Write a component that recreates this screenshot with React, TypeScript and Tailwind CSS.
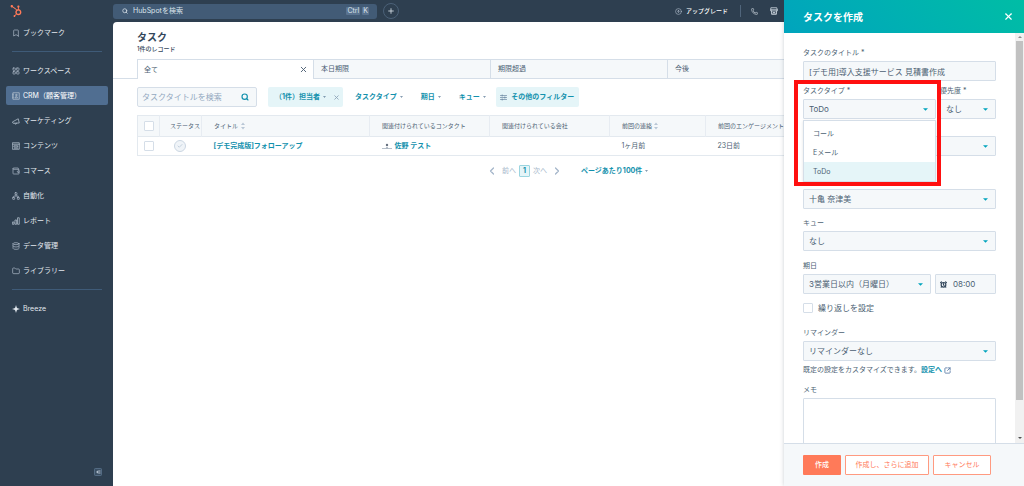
import React from "react";
import type { ReactNode } from "react";
import {
  Bookmark,
  LayoutGrid,
  Wallet,
  Network,
  Database,
  Folder,
  Search,
  Plus,
  CircleArrowUp,
  Phone,
  X,
  Check,
  ChevronLeft,
  ChevronRight,
  SquareArrowOutUpRight,
  AlarmClock,
} from "lucide-react";
import { FaHubspot } from "react-icons/fa";

type IconProps = { className?: string; strokeWidth?: number };

function LineIcon({ className, children }: IconProps & { children: ReactNode }) {
  return (
    <svg
      viewBox="0 0 16 16"
      className={className}
      fill="none"
      stroke="currentColor"
      strokeWidth="1.5"
      strokeLinejoin="round"
      strokeLinecap="round"
      aria-hidden="true"
    >
      {children}
    </svg>
  );
}

const ContactCard = (p: IconProps) => (
  <LineIcon {...p}>
    <path d="M2.5 1.5h12v13h-12zM1 4.5h2M1 8h2M1 11.500h2" />
    <circle cx="8.500" cy="6" r="1.400" />
    <path d="M6 11c0-3 5-3 5 0z" />
  </LineIcon>
);

const Horn = (p: IconProps) => (
  <LineIcon {...p}>
    <path d="M1.500 9.500 12.500 3.500 14.500 12 3 12.500zM5.500 12.500c0 3 4 2.500 4-.300" />
  </LineIcon>
);

const Article = (p: IconProps) => (
  <LineIcon {...p}>
    <path d="M1.500 1.500h13v13h-13zM1.500 4.500h13M4.500 7.500h7v2.500h-7zM4.500 12.300h7" />
  </LineIcon>
);

const Bars = (p: IconProps) => (
  <LineIcon {...p}>
    <path d="M1.500 10h2.600v4.500H1.500zM6.700 6h2.600v8.500H6.700zM11.900 1.500h2.600v13h-2.600z" />
  </LineIcon>
);

const Breeze = ({ className }: IconProps) => (
  <svg viewBox="0 0 16 16" className={className} aria-hidden="true">
    <path d="M8 0l1.500 5L11 6.500 16 8l-5 1.500L9.500 11 8 16l-1.500-5L5 9.500 0 8l5-1.500L6.500 5z" fill="#e3e9ef" />
  </svg>
);

const Shop = (p: IconProps) => (
  <LineIcon {...p}>
    <path d="M2.500 1.500h11l1 4v2.500h-13V5.500zM1.500 5.500h13M3 8v6.500h10V8M6 14.500v-3.500h4v3.500" />
  </LineIcon>
);

const Filters = (p: IconProps) => (
  <LineIcon {...p}>
    <path d="M1 3.500h14M1 8h14M1 12.500h14M5 2v3M11 6.500v3M5 11v3" />
  </LineIcon>
);

const navItems = [
  { label: "ワークスペース", Icon: LayoutGrid },
  { label: "CRM（顧客管理）", Icon: ContactCard, active: true },
  { label: "マーケティング", Icon: Horn },
  { label: "コンテンツ", Icon: Article },
  { label: "コマース", Icon: Wallet },
  { label: "自動化", Icon: Network },
  { label: "レポート", Icon: Bars },
  { label: "データ管理", Icon: Database },
  { label: "ライブラリー", Icon: Folder },
];

function NavLink({ label, Icon, active }: { label: string; Icon: React.ElementType; active?: boolean }) {
  return (
    <a
      href="#"
      className={
        active
          ? "flex h-[19px] items-center gap-[3px] rounded-[2px] bg-[#506e91] px-1.5 text-white"
          : "flex h-[19px] items-center gap-[3px] rounded-[2px] px-1.5 text-[#e3e9ef]"
      }
    >
      <Icon className="size-2 shrink-0 text-[#b3c0ce]" strokeWidth={2} />
      <span className="whitespace-nowrap">{label}</span>
    </a>
  );
}

function Caret({ className }: { className: string }) {
  return (
    <svg viewBox="0 0 6 3" className={className} aria-hidden="true">
      <path d="M0 0h6L3 3z" fill="currentColor" />
    </svg>
  );
}

function SortMark() {
  return (
    <svg viewBox="0 0 4 8" className="h-2 w-1 shrink-0 text-[#b9c7d6]" aria-hidden="true">
      <path d="M0 3h4L2 .5zM0 5h4L2 7.500z" fill="currentColor" />
    </svg>
  );
}

function FilterButton({ children }: { children: ReactNode }) {
  return (
    <button type="button" className="flex h-5 items-center gap-[3px] whitespace-nowrap font-bold text-[#1391ad]">
      {children}
      <Caret className="h-0.5 w-[3px] text-[#5f7d99]" />
    </button>
  );
}

function SelectBox({ id, value, label, options }: { id: string; value: string; label?: string; options?: string[] }) {
  return (
    <div className="relative">
      <select
        id={id}
        aria-label={label}
        defaultValue={value}
        className="block h-5 w-full appearance-none rounded-[1px] border border-[#d5dee8] bg-[#f5f8fa] pr-3 pl-[5px] text-[8px] text-[#4c5f73]"
      >
        {(options ?? [value]).map((o) => (
          <option key={o}>{o}</option>
        ))}
      </select>
      <Caret className="pointer-events-none absolute top-[9px] right-2 h-[3px] w-[5px] text-[#00a4bd]" />
    </div>
  );
}

function Label({ htmlFor, children }: { htmlFor: string; children: ReactNode }) {
  return (
    <label htmlFor={htmlFor} className="mb-0.5 block h-3 text-[7px] leading-3 whitespace-nowrap text-[#4c5f73]">
      {children}
    </label>
  );
}

const tabs = ["本日期限", "期限超過", "今後"];

function TaskTable() {
  const head = "border-r border-[#e7ecf2] pl-3 text-left font-normal whitespace-nowrap";
  return (
    <table className="w-[700px] table-fixed border-collapse border border-[#e3e9ef] text-[6px] text-[#4c5f73]">
      <colgroup>
        <col className="w-[22px]" />
        <col className="w-[42px]" />
        <col className="w-[168px]" />
        <col className="w-[120px]" />
        <col className="w-[120px]" />
        <col className="w-[96px]" />
        <col />
      </colgroup>
      <thead>
        <tr className="h-[21px] border-b border-[#e3e9ef] bg-[#f5f8fa]">
          <th className="border-r border-[#e7ecf2] pl-1.5">
            <input type="checkbox" aria-label="すべて選択" className="block size-2.5 appearance-none rounded-[1px] border border-[#d5dee8] bg-white" />
          </th>
          <th className="border-r border-[#e7ecf2] pl-2.5 text-left font-normal whitespace-nowrap">ステータス</th>
          <th className={head}>
            <span className="flex items-center gap-[3px]">タイトル<SortMark /></span>
          </th>
          <th className={head}>関連付けられているコンタクト</th>
          <th className={head}>関連付けられている会社</th>
          <th className={head}>
            <span className="flex items-center gap-0.5">前回の連絡<SortMark /></span>
          </th>
          <th className={head}>前回のエンゲージメント</th>
        </tr>
      </thead>
      <tbody className="text-[7px]">
        <tr className="h-[19px]">
          <td className="pl-1.5">
            <input type="checkbox" aria-label="フォローアップを選択" className="block size-2.5 appearance-none rounded-[1px] border border-[#d5dee8] bg-white" />
          </td>
          <td className="pl-3.5">
            <button type="button" aria-label="完了" className="flex size-3 items-center justify-center rounded-full border border-[#cbd6e2] bg-[#f0f4f8] text-[#b6c5d5]">
              <Check className="size-1.5" strokeWidth={3} />
            </button>
          </td>
          <td className="pl-3">
            <a href="#" className="font-bold whitespace-nowrap text-[#1391ad]">[デモ完成版]フォローアップ</a>
          </td>
          <td className="pl-3">
            <a href="#" className="flex items-center gap-[3px] font-bold whitespace-nowrap text-[#1391ad]">
              <svg viewBox="0 0 10 6" className="h-1.5 w-2.5" aria-hidden="true">
                <path d="M0 5.500h10" stroke="#a3afbb" strokeWidth="0.8" />
                <circle cx="5" cy="2" r="1.200" fill="#66707f" />
                <path d="M3.800 5.400c0-2 2.400-2 2.400 0z" fill="#a3afbb" />
              </svg>
              佐野 テスト
            </a>
          </td>
          <td />
          <td className="pl-3">1ヶ月前</td>
          <td className="pl-3">23日前</td>
        </tr>
      </tbody>
    </table>
  );
}

function CreateTaskDrawer() {
  return (
    <form className="absolute inset-y-0 right-0 flex w-60 flex-col bg-white shadow-[0_0_4px_rgba(45,62,80,0.25)]">
      <header className="flex h-[33px] shrink-0 items-center justify-between bg-linear-45 from-[#00a4bd] to-[#00bda5] pr-2.5 pl-[19px] text-white">
        <h2 className="text-[10px] leading-3 font-bold">タスクを作成</h2>
        <button type="button" aria-label="閉じる">
          <X className="size-[11px]" strokeWidth={2.5} />
        </button>
      </header>

      <div className="flex min-h-0 flex-1">
        <div className="min-w-0 flex-1 overflow-hidden pt-3.5 pr-[19px] pl-[19px]">
          <Label htmlFor="title">タスクのタイトル *</Label>
          <input
            id="title"
            defaultValue="[デモ用]導入支援サービス 見積書作成"
            className="block h-5 w-full rounded-[1px] border border-[#d5dee8] bg-[#f5f8fa] px-[5px] text-[8px] text-[#4c5f73]"
          />

          <div className="mt-1 flex gap-1">
            <div className="relative z-10 flex-1">
              <Label htmlFor="type">タスクタイプ *</Label>
              <SelectBox id="type" value="ToDo" options={["コール", "Eメール", "ToDo"]} />
              <ul role="listbox" className="absolute inset-x-0 top-full mt-px border border-[#d5dee8] bg-white pt-[3px] text-[7px] leading-[19px] text-[#4c5f73] shadow-sm">
                <li role="option" aria-selected="false" className="px-[9px]">コール</li>
                <li role="option" aria-selected="false" className="px-[9px]">Eメール</li>
                <li role="option" aria-selected="true" className="bg-[#e5f5f8] px-[9px]">ToDo</li>
              </ul>
              <div className="pointer-events-none absolute -top-[5px] -right-[5px] -left-[9px] h-[106px] border-4 border-[#ff0f0f]" />
            </div>
            <div className="w-14">
              <Label htmlFor="priority">優先度 *</Label>
              <SelectBox id="priority" value="なし" />
            </div>
          </div>

          <div className="mt-[17px]">
            <SelectBox id="related" label="関連付け" value="" />
          </div>
          <div className="mt-[33px]">
            <SelectBox id="owner" label="担当者" value="十亀 奈津美" />
          </div>

          <div className="mt-2">
            <Label htmlFor="queue">キュー</Label>
            <SelectBox id="queue" value="なし" />
          </div>

          <div className="mt-[9px]">
            <Label htmlFor="due">期日</Label>
            <div className="flex gap-1">
              <div className="flex-1">
                <SelectBox id="due" value="3営業日以内（月曜日）" />
              </div>
              <div className="flex h-5 w-[61px] items-center gap-1.5 rounded-[1px] border border-[#d5dee8] bg-[#f5f8fa] pl-1">
                <AlarmClock className="size-[7px] shrink-0 text-[#33475b]" strokeWidth={4} />
                <input aria-label="時刻" defaultValue="08:00" className="w-full min-w-0 bg-transparent text-[8px] text-[#4c5f73]" />
              </div>
            </div>
          </div>

          <label className="mt-2 flex h-3 items-center gap-[5px] text-[8px] text-[#4c5f73]">
            <input type="checkbox" className="size-2.5 appearance-none rounded-[1px] border border-[#d5dee8] bg-white" />
            繰り返しを設定
          </label>

          <div className="mt-[13px]">
            <Label htmlFor="reminder">リマインダー</Label>
            <SelectBox id="reminder" value="リマインダーなし" />
          </div>
          <p className="mt-[3px] flex h-3 items-center text-[7px] whitespace-nowrap text-[#4c5f73]">
            既定の設定をカスタマイズできます。
            <a href="#" className="flex items-center gap-0.5 font-bold text-[#1391ad]">
              設定へ
              <SquareArrowOutUpRight className="size-[7px] text-[#5f7fa8]" strokeWidth={3} />
            </a>
          </p>

          <div className="mt-2">
            <Label htmlFor="memo">メモ</Label>
            <textarea id="memo" className="block h-20 w-full resize-none rounded-[1px] border border-[#d5dee8] bg-white" />
          </div>
        </div>

        <div aria-hidden="true" className="flex w-[9px] shrink-0 flex-col items-center bg-[#f1f1f1]">
          <div className="flex h-2 items-center">
            <Caret className="h-0.5 w-1 rotate-180 text-[#8a8a8a]" />
          </div>
          <div className="w-[7px] flex-[11] bg-[#c1c1c1]" />
          <div className="flex-1" />
          <div className="flex h-2.5 items-center">
            <Caret className="h-0.5 w-1 text-[#505050]" />
          </div>
        </div>
      </div>

      <footer className="flex h-[43px] shrink-0 items-center gap-1 border-t border-[#d5dee8] bg-[#f5f8fa] pl-[19px] text-[7px] whitespace-nowrap">
        <button type="submit" className="h-5 w-[38px] rounded-[1px] bg-[#ff7a59] font-medium text-white">作成</button>
        <button type="button" className="h-5 w-[84px] rounded-[1px] border border-[#ff9a80] bg-white text-[#ff7a59]">作成し、さらに追加</button>
        <button type="button" className="h-5 w-[58px] rounded-[1px] border border-[#ff9a80] bg-white text-[#ff7a59]">キャンセル</button>
      </footer>
    </form>
  );
}

export default function App() {
  return (
    <div className="relative flex h-screen flex-col overflow-hidden bg-[#2e3f50] font-['Inter','Noto_Sans_CJK_JP',sans-serif] text-[7px] leading-3">
      <header className="flex h-[22px] shrink-0 items-center text-[#dbe3eb]">
        <a href="#" aria-label="HubSpot" className="w-[113px] shrink-0 pl-2.5 text-[#ff7a59]">
          <FaHubspot className="size-3" />
        </a>
        <label className="flex h-[15px] w-[264px] items-center gap-[5px] rounded-[3px] bg-[#425b76] pr-2 pl-[9px]">
          <Search className="size-1.5 shrink-0" strokeWidth={3} />
          <input aria-label="HubSpotを検索" placeholder="HubSpotを検索" className="min-w-0 flex-1 bg-transparent placeholder:text-[#dbe3eb]" />
          <span className="flex gap-0.5 leading-2">
            <kbd className="rounded-[1px] bg-[#5a7390] px-px font-['Inter']">Ctrl</kbd>
            <kbd className="rounded-[1px] bg-[#5a7390] px-px font-['Inter']">K</kbd>
          </span>
        </label>
        <button type="button" aria-label="作成" className="ml-1.5 flex size-4 items-center justify-center rounded-full border border-[#4b6178]">
          <Plus className="size-2" strokeWidth={2.5} />
        </button>
        <div className="ml-auto flex items-center pr-[246px]">
          <a href="#" className="flex items-center gap-1 text-[6px] font-medium text-white">
            <CircleArrowUp className="size-[7px] text-[#b3c0ce]" />
            アップグレード
          </a>
          <span className="mr-2.5 ml-3 h-3 w-px bg-[#50657b]" />
          <Phone className="mr-3 size-[7px]" />
          <Shop className="size-2" />
        </div>
      </header>

      <div className="flex min-h-0 flex-1">
        <nav className="flex w-[113px] shrink-0 flex-col pt-px pr-[5px] pb-2.5 pl-1.5">
          <NavLink label="ブックマーク" Icon={Bookmark} />
          <hr className="mx-1.5 my-[9px] h-px border-0 bg-[#3f5b78]" />
          <div className="flex flex-col gap-1.5">
            {navItems.map((item) => (
              <NavLink key={item.label} {...item} />
            ))}
          </div>
          <hr className="mx-1.5 my-[9px] h-px border-0 bg-[#3f5b78]" />
          <NavLink label="Breeze" Icon={Breeze} />
          <button type="button" aria-label="メニューを閉じる" className="mt-auto mr-1.5 self-end text-[#8498ad]">
            <svg viewBox="0 0 16 16" className="size-2" aria-hidden="true">
              <rect x="1" y="1" width="14" height="14" rx="1.500" fill="#3a4f64" stroke="#5f7891" strokeWidth="1.500" />
              <path d="M9 4v8L4 8zM11 4h1.500v8H11z" fill="#b3c0ce" />
            </svg>
          </button>
        </nav>

        <main className="min-w-0 flex-1 overflow-hidden rounded-tl-[4px] bg-white text-[#33475b]">
          <div className="pt-2 pl-6">
            <h1 className="text-[10px] leading-[14px] font-bold">タスク</h1>
            <p className="h-[15px] text-[6px] leading-[10px] font-medium">1件のレコード</p>
          </div>

          <div className="flex h-5 text-[#4c5f73]">
            <div className="w-6 shrink-0 border-b border-[#d5dee8]" />
            <button type="button" className="flex w-[177px] shrink-0 items-center justify-between border border-b-0 border-[#d5dee8] pr-[5px] pl-1.5">
              全て
              <X className="size-[9px]" strokeWidth={2.5} />
            </button>
            {tabs.map((tab) => (
              <button key={tab} type="button" className="w-[177px] shrink-0 border border-l-0 border-[#d5dee8] bg-[#f5f8fa] pl-[7px] text-left">
                {tab}
              </button>
            ))}
          </div>

          <div className="mt-2 flex h-5 items-center pl-6">
            <label className="flex h-5 w-[120px] items-center rounded-[2px] border border-[#d5dee8] bg-[#f5f8fa] pr-[7px] pl-1">
              <input aria-label="タスクタイトルを検索" placeholder="タスクタイトルを検索" className="min-w-0 flex-1 bg-transparent text-[8px] placeholder:text-[#93a8bf]" />
              <Search className="size-2 shrink-0 text-[#1391ad]" strokeWidth={3.5} />
            </label>
            <div className="ml-[11px] flex h-5 w-[75px] items-center justify-between rounded-[2px] bg-[#e5f5f8] pr-[3px] pl-[7px]">
              <FilterButton>（1件）担当者</FilterButton>
              <button type="button" aria-label="担当者フィルターを削除">
                <X className="size-[7px] text-[#8ea3b8]" strokeWidth={3} />
              </button>
            </div>
            <div className="ml-3 flex gap-[18px]">
              <FilterButton>タスクタイプ</FilterButton>
              <FilterButton>期日</FilterButton>
              <FilterButton>キュー</FilterButton>
            </div>
            <button type="button" className="ml-2.5 flex h-5 w-[83px] items-center justify-center gap-1 rounded-[2px] bg-[#e5f5f8] font-bold whitespace-nowrap text-[#1391ad]">
              <Filters className="size-[7px] text-[#5f7d99]" />
              その他のフィルター
            </button>
          </div>

          <div className="mt-2 pl-6">
            <TaskTable />
          </div>

          <div className="mt-2 flex h-3.5 items-center pl-[373px] text-[#a3b5c9]">
            <button type="button" className="flex items-center gap-1">
              <ChevronLeft className="size-3" strokeWidth={2.5} />
              前へ
            </button>
            <button type="button" className="mx-[3px] h-3 w-[11px] rounded-[1px] border border-[#9bd5e0] bg-[#e5f5f8] leading-2.5 font-bold text-[#1391ad]">1</button>
            <button type="button" className="flex items-center gap-1">
              次へ
              <ChevronRight className="size-3" strokeWidth={2.5} />
            </button>
            <div className="ml-[18px]">
              <FilterButton>ページあたり100件</FilterButton>
            </div>
          </div>
        </main>
      </div>

      <CreateTaskDrawer />
    </div>
  );
}
